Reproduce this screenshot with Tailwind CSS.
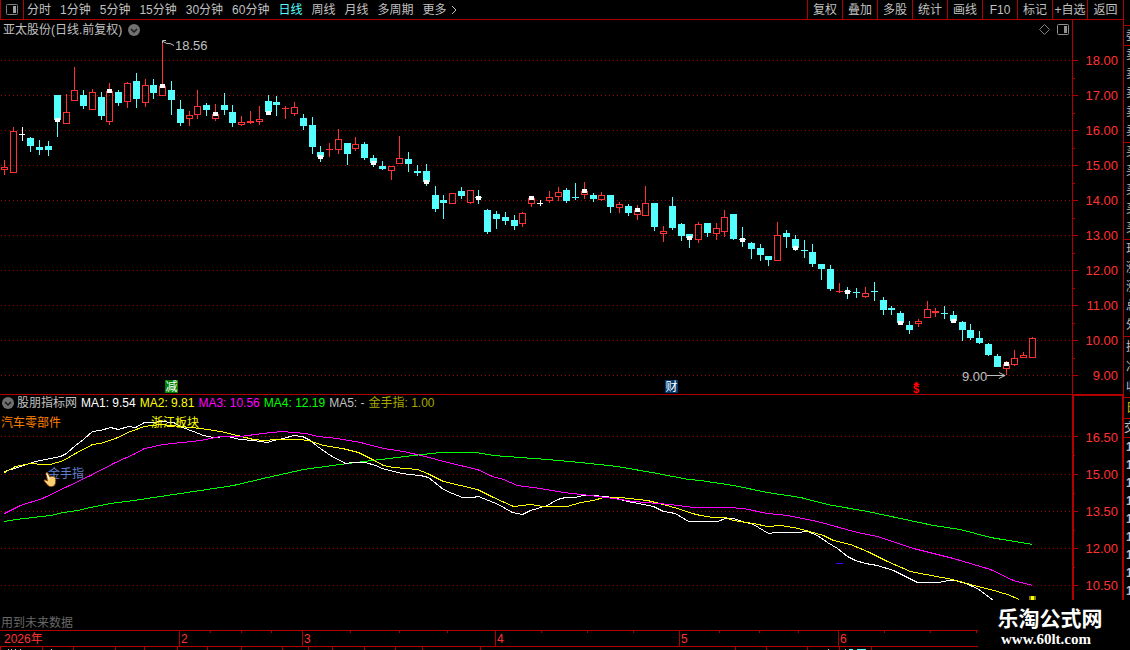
<!DOCTYPE html>
<html lang="zh-CN">
<head>
    <meta charset="UTF-8">
    <meta name="viewport" content="width=device-width, initial-scale=1.0">
    <title>亚太股份 日线</title>
    <script src="https://cdn.jsdelivr.net/npm/@tailwindcss/browser@4"></script>
</head>
<style>
    body { font-family: 'Liberation Sans', 'Noto Sans CJK SC', sans-serif; }
</style>
<body class="relative h-screen flex flex-col bg-black text-[#c0c0c0] text-xs leading-[14px] overflow-hidden">
    <div class="flex flex-1 min-h-0">
        <div class="flex-1 min-w-0 flex flex-col">
            <!-- Toolbar -->
            <nav class="h-5 shrink-0 flex justify-between border-b border-[#b00000] whitespace-nowrap">
                <div class="flex items-center gap-[3px]">
                    <button class="h-full w-6 flex items-center justify-center border-x border-[#b00000]" aria-label="侧栏">
                        <svg class="w-3 h-[11px]" viewBox="0 0 12 11"><rect x=".5" y=".5" width="11" height="10" rx="1" fill="none" stroke="#808080"/><rect x="7" y="2" width="3" height="7" fill="#a0a0a0"/></svg>
                    </button>
                    <div class="flex items-center gap-[9px]">
                        <button>分时</button>
                        <button>1分钟</button>
                        <button>5分钟</button>
                        <button>15分钟</button>
                        <button>30分钟</button>
                        <button>60分钟</button>
                        <button class="text-[#54ffff]">日线</button>
                        <button>周线</button>
                        <button>月线</button>
                        <button>多周期</button>
                        <button class="flex items-center gap-1">更多
                            <svg class="w-[6px] h-[10px]" viewBox="0 0 6 10" fill="none" stroke="#c0c0c0"><path d="M1 1l4 4-4 4"/></svg>
                        </button>
                    </div>
                </div>
                <div class="flex">
                    <button class="w-[35px] border-l border-[#b00000]">复权</button>
                    <button class="w-[35px] border-l border-[#b00000]">叠加</button>
                    <button class="w-[35px] border-l border-[#b00000]">多股</button>
                    <button class="w-[35px] border-l border-[#b00000]">统计</button>
                    <button class="w-[35px] border-l border-[#b00000]">画线</button>
                    <button class="w-[35px] border-l border-[#b00000]">F10</button>
                    <button class="w-[35px] border-l border-[#b00000]">标记</button>
                    <button class="w-[35px] border-l border-[#b00000]">+自选</button>
                    <button class="w-[36px] border-l border-[#b00000]">返回</button>
                </div>
            </nav>

            <!-- Daily candles -->
            <section class="flex-[375] min-h-0 flex">
                <div class="relative flex-1 min-w-0 border-b border-[#b00000]">
                    <svg id="candles" class="block w-full h-full" viewBox="0 20 1072 374" preserveAspectRatio="none"></svg>
                    <div class="absolute top-0 inset-x-0 h-[19px] pl-[3px] pr-[3px] flex items-center justify-between">
                        <div class="flex items-center gap-[6px]">
                            <h1>亚太股份(日线.前复权)</h1>
                            <button aria-label="展开"><svg class="w-3 h-3" viewBox="0 0 12 12"><circle cx="6" cy="6" r="6" fill="#707070"/><path d="M3 5l3 3 3-3" fill="none" stroke="#181818" stroke-width="1.5"/></svg></button>
                        </div>
                        <div class="flex items-center gap-[7px]">
                            <svg class="w-[11px] h-[11px]" viewBox="0 0 11 11"><path d="M5.500.5l5 5-5 5-5-5z" fill="none" stroke="#808080"/></svg>
                            <svg class="w-3 h-[11px]" viewBox="0 0 12 11"><rect x=".5" y=".5" width="11" height="10" rx="1" fill="none" stroke="#909090"/><rect x="7" y="2" width="3" height="7" fill="#909090"/></svg>
                        </div>
                    </div>
                </div>
                <div class="relative w-[51px] border-l border-[#b00000]">
                    <svg id="ticksTop" class="absolute left-0 top-0 w-[6px] h-full" viewBox="0 20 6 375" preserveAspectRatio="none"></svg>
                    <div class="pt-[23px] pr-[5px] text-right text-[13px] leading-[35px] text-[#ff3232]">
                        <div>18.00</div><div>17.00</div><div>16.00</div><div>15.00</div><div>14.00</div>
                        <div>13.00</div><div>12.00</div><div>11.00</div><div>10.00</div><div>9.00</div>
                    </div>
                </div>
            </section>

            <!-- Moving averages -->
            <section class="flex-[205] min-h-0 flex">
                <div class="relative flex-1 min-w-0">
                    <svg id="averages" class="block w-full h-full" viewBox="0 395 1072 205" preserveAspectRatio="none"></svg>
                    <div class="absolute top-0 left-0 h-4 pl-[2px] flex items-center gap-1 whitespace-nowrap">
                        <button class="flex items-center gap-[3px]">
                            <svg class="w-3 h-3" viewBox="0 0 12 12"><circle cx="6" cy="6" r="6" fill="#707070"/><path d="M3 5l3 3 3-3" fill="none" stroke="#181818" stroke-width="1.5"/></svg>
                            股朋指标网
                        </button>
                        <span class="text-white">MA1: 9.54</span>
                        <span class="text-[#ffff00]">MA2: 9.81</span>
                        <span class="text-[#ff00ff]">MA3: 10.56</span>
                        <span class="text-[#00ff00]">MA4: 12.19</span>
                        <span>MA5: -</span>
                        <span class="text-[#a8a800]">金手指: 1.00</span>
                    </div>
                </div>
                <div class="relative w-[51px] border-2 border-b-0 border-r border-[#b00000] -mt-px">
                    <svg id="ticksLow" class="absolute left-0 top-0 w-[5px] h-full" viewBox="0 396 5 204" preserveAspectRatio="none"></svg>
                    <div class="pt-[23px] pr-1 text-right text-[13px] leading-[37px] text-[#ff3232]">
                        <div>16.50</div><div>15.00</div><div>13.50</div><div>12.00</div><div>10.50</div>
                    </div>
                </div>
            </section>
        </div>

        <!-- Quote panel, cut by the window edge -->
        <aside class="w-[7px] shrink-0 border-l border-[#b00000] overflow-hidden whitespace-nowrap">
            <div class="h-[26px] border-b border-[#b00000]"></div>
            <div class="h-5 pl-[2px] leading-[20px] border-b border-[#b00000]">委比</div>
            <div class="h-[97px] pl-[2px] leading-[19px] border-b border-[#b00000]">
                <div>卖五</div><div>卖四</div><div>卖三</div><div>卖二</div><div>卖一</div>
            </div>
            <div class="h-[97px] pl-[2px] leading-[19px] border-b border-[#b00000]">
                <div>买一</div><div>买二</div><div>买三</div><div>买四</div><div>买五</div>
            </div>
            <div class="h-[97px] pl-[2px] leading-[19px] border-b border-[#b00000]">
                <div>现价</div><div>涨跌</div><div>涨幅</div><div>总量</div><div>外盘</div>
            </div>
            <div class="h-[61px] pl-[2px] leading-[20px] border-b border-[#b00000]">
                <div>换手</div><div>净资</div><div>收益</div>
            </div>
            <div class="h-[21px] pl-[2px] leading-[20px] text-[#c8c800] border-b border-[#b00000]">日</div>
            <div class="h-[19px] leading-[18px] border-b border-[#b00000]">交易</div>
            <div class="pl-[2px] leading-[18px] font-bold">
                <div>14</div><div>14</div><div>14</div><div>14</div><div>14</div><div>14</div><div>14</div><div>14</div><div>14</div>
            </div>
        </aside>
    </div>

    <!-- Status note and date axis -->
    <div class="h-[30px] shrink-0 flex items-end pl-px text-[#686868]">用到未来数据</div>
    <div class="relative h-[17px] shrink-0 grid grid-cols-[179fr_123fr_193fr_184fr_159fr_292fr] border-y border-[#b00000] text-[#ff3232] leading-[16px]">
        <div class="pl-[4px]">2026年</div>
        <div class="pl-px border-l border-[#b00000]">2</div>
        <div class="pl-px border-l border-[#b00000]">3</div>
        <div class="pl-px border-l border-[#b00000]">4</div>
        <div class="pl-px border-l border-[#b00000]">5</div>
        <div class="pl-px border-l border-[#b00000]">6</div>
        <svg id="ticksDate" class="absolute top-0 left-0 w-full h-[2px]" viewBox="0 0 1130 2" preserveAspectRatio="none"></svg>
    </div>
    <svg id="ticksNext" class="w-full h-[3px] shrink-0" viewBox="0 0 1130 3" preserveAspectRatio="none"></svg>

    <!-- Site mark -->
    <footer class="absolute right-0 bottom-0 w-[152px] h-[50px] pt-[7px] pr-[8px] bg-black text-white text-center font-bold">
        <div class="text-[21px] leading-[24px]">乐淘公式网</div>
        <a href="#" class="block pr-[8px] text-[15px] leading-[16px] font-['Liberation_Serif']">www.60lt.com</a>
    </footer>

    <script>
        // [kind, high, body top, body bottom, low, marker top]
        // r = rising, c = falling, w = unchanged
        const bars = [
            ['r',160,167,170,175], ['r',127,131,173,173], ['w',127,134,135,141], ['c',137,138,146,152], ['c',140,147,150,155],
            ['c',141,146,150,156], ['c',95,95,120,137,118], ['r',94,112,124,124], ['r',67,90,101,101], ['c',90,95,106,109],
            ['r',89,92,110,110], ['c',92,97,116,120], ['r',83,91,122,125,89], ['c',90,92,103,106], ['r',82,83,102,108],
            ['c',73,81,99,108], ['r',79,85,103,107], ['c',79,85,93,99], ['r',42,86,96,96,84], ['c',81,90,100,115],
            ['c',100,109,123,126], ['r',111,115,119,126], ['r',90,106,115,119], ['c',103,105,110,116], ['r',104,114,119,121,112],
            ['c',93,105,110,115], ['c',105,112,123,127], ['r',116,122,125,126], ['r',111,121,123,124], ['r',106,119,122,125],
            ['c',95,101,112,115,111], ['c',96,102,105,116], ['r',106,108,109,119], ['r',102,107,114,116], ['c',114,118,126,130],
            ['c',117,125,147,154], ['c',146,152,157,162,155], ['r',143,149,150,157], ['r',129,139,150,154], ['c',143,143,154,165],
            ['r',137,144,149,151], ['c',142,144,158,160], ['c',155,158,163,167,161], ['c',161,166,169,170], ['r',166,166,171,180],
            ['r',136,158,164,164], ['c',152,159,164,172], ['c',165,171,173,176], ['c',164,171,182,186,180], ['c',186,195,209,212],
            ['c',195,200,203,219], ['r',193,193,204,204], ['c',187,191,196,199], ['r',190,190,203,204], ['c',190,197,198,204,196],
            ['c',209,210,232,234], ['c',211,214,219,229], ['c',212,217,221,225], ['c',215,220,226,230], ['r',212,213,224,227],
            ['r',196,198,204,207,196], ['w',200,203,204,206], ['r',191,197,201,203], ['r',187,192,197,201], ['c',188,190,201,203],
            ['c',183,197,198,200], ['r',182,191,195,199,189], ['c',193,195,199,202], ['r',192,195,200,201], ['c',195,195,207,213],
            ['r',202,204,208,213], ['c',204,206,213,216], ['r',205,210,215,220,208], ['r',186,203,216,216], ['c',203,203,227,231],
            ['r',226,231,234,242], ['c',197,206,228,230], ['c',223,224,236,241], ['c',234,234,238,248,236], ['r',222,224,240,243],
            ['c',223,223,233,237], ['r',223,228,234,240], ['r',210,217,232,237], ['c',214,214,239,240], ['c',227,239,240,247,238],
            ['c',242,243,249,259], ['c',244,248,255,261], ['c',256,256,260,266], ['r',222,235,261,261], ['c',230,233,237,248],
            ['c',235,239,248,251,246], ['c',240,250,251,258], ['c',244,252,264,267], ['c',264,264,269,280], ['c',265,269,289,291],
            ['r',283,291,292,293], ['c',287,291,292,299,290], ['c',288,292,293,298], ['r',287,293,297,298], ['c',282,291,292,301],
            ['c',297,300,310,315], ['c',306,308,310,315], ['c',311,313,323,323,321], ['c',321,325,330,334], ['r',319,321,324,327],
            ['r',301,309,318,318], ['r',308,311,313,317], ['c',306,313,314,319], ['c',311,315,321,322,319], ['c',321,322,330,341],
            ['c',324,330,338,340], ['c',331,338,343,344], ['c',343,344,355,356], ['c',354,356,367,367], ['r',361,364,369,375,362],
            ['r',350,358,365,366], ['r',352,355,358,358], ['r',337,338,358,358]
        ];
        const colors = { r: '#ff3232', c: '#54ffff', w: '#ffffff' };
        const gridTop = [60, 95, 130, 165, 200, 235, 270, 305, 340, 375];
        const gridLow = [436, 474, 511, 548, 585];

        const box = (x, y, w, h, fill) => `<rect x="${x}" y="${y}" width="${w}" height="${h}" fill="${fill}" shape-rendering="crispEdges"/>`;
        const grid = rows => rows.map(y => `<path d="M1 ${y + 0.5}H1071" stroke="#a00000" stroke-dasharray="1 3" shape-rendering="crispEdges"/>`).join('');

        function drawBar(bar, i) {
            const [kind, high, top, bottom, low, marker] = bar;
            const x = Math.round(4 + i * 8.786);
            const color = colors[kind];
            let out = '';
            if (kind === 'r' && bottom - top > 2) {
                out += box(x, high, 1, top - high, color) + box(x, bottom, 1, low - bottom, color);
                out += `<rect x="${x - 2.5}" y="${top + 0.5}" width="6" height="${bottom - top - 1}" fill="none" stroke="${color}" shape-rendering="crispEdges"/>`;
            } else {
                out += box(x, high, 1, low - high, color);
                out += box(x - 3, top, kind === 'w' ? 6 : 7, bottom - top, color);
            }
            if (marker) out += box(x - 2, marker, 5, 4, '#ffffff');
            return out;
        }

        // Candle chart with its notes
        document.getElementById('candles').innerHTML = grid(gridTop) + bars.map(drawBar).join('') + `
            <path d="M162.500 43V40.500H166M163 41.500l4 2h3l4 2" fill="none" stroke="#c0c0c0"/>
            <text x="175" y="50" font-size="13" fill="#c0c0c0">18.56</text>
            <text x="962" y="381" font-size="13" fill="#c0c0c0">9.00</text>
            <path d="M987 375.500H1005M999 372.500l6 3-6 3" fill="none" stroke="#c0c0c0"/>
            <rect x="165" y="380" width="13" height="13" fill="#008000"/>
            <text x="165.500" y="391" font-size="12" fill="#ffffff">减</text>
            <rect x="665" y="380" width="13" height="13" fill="#003a70"/>
            <text x="665.500" y="391" font-size="12" fill="#ffffff">财</text>
            <path d="M913 385h7l-3.500-3.500z" fill="#ff0000"/>
            <text x="913" y="393" font-size="11" font-weight="bold" fill="#ff0000">$</text>`;

        // Moving average lines
        const lines = [
            ['#00ff00', '4,521 15,519 50,515 63,512 77,510 90,507 110,503 133,500 160,496 200,490 233,485 267,477 303,469 347,463 380,459 413,455 440,452 475,452 493,455 547,459 580,462 617,466 657,473 688,479 700,480 733,485 767,492 800,497 827,504 867,511 900,518 933,525 960,529 990,537 1032,544'],
            ['#ffffff', '4,471 20,466 35,461 50,458 60,456 66,453 75,445 83,439 92,431 100,430 110,427 118,429 128,426 135,427 144,422 153,422 160,421 173,422 182,427 193,431 203,435 213,437 227,436 240,439 253,440 267,442 273,440 283,438 293,435 302,436 310,440 317,446 330,455 345,463 353,462 365,462 375,465 382,468 397,472 408,474 420,475 428,477 443,489 452,493 462,497 472,497 478,496 483,498 498,504 512,512 522,514 530,510 547,505 557,499 565,497 575,497 582,495 593,495 613,497 627,501 638,503 653,506 663,511 675,513 688,521 717,521 725,518 733,518 742,521 753,524 768,533 775,532 797,532 807,531 817,535 827,542 837,548 847,556 855,560 865,563 877,565 893,570 907,577 917,582 938,582 948,580 955,580 965,583 977,588 993,600'],
            ['#ffff00', '4,472 15,466 30,463 43,464 50,464 63,460 75,453 92,444 100,443 115,438 130,431 144,426 160,424 180,426 200,428 220,431 237,435 253,439 263,440 277,439 298,439 308,440 323,445 342,448 358,452 372,459 383,465 393,467 417,469 427,473 443,481 460,485 477,489 493,497 513,506 530,504 543,506 567,506 580,502 593,500 603,497 620,497 647,500 663,504 677,508 692,513 700,515 713,517 725,517 733,520 753,523 767,526 780,525 798,528 823,535 833,540 850,544 867,551 887,561 910,571 920,573 947,578 960,581 973,585 990,589 1007,594 1019,599'],
            ['#ff00ff', '4,513 20,505 42,498 67,486 90,475 115,462 133,454 144,448 163,444 200,440 220,436 240,436 262,433 282,431 305,433 318,436 337,438 360,442 383,448 403,451 425,456 447,462 477,469 492,476 503,479 517,485 540,488 563,492 590,495 613,498 633,501 670,504 693,507 728,507 743,508 767,513 787,515 817,521 857,532 877,536 913,548 953,558 990,569 1013,580 1032,585']
        ];
        document.getElementById('averages').innerHTML = grid(gridLow)
            + lines.map(([color, points]) => `<polyline points="${points}" fill="none" stroke="${color}" transform="translate(.5 .5)" shape-rendering="crispEdges"/>`).join('')
            + box(836, 563, 7, 1, '#5000ff') + box(1029, 596, 7, 4, '#808000') + box(1031, 596, 3, 4, '#ffff00') + `
            <text x="1" y="427" font-size="12" fill="#ff8000">汽车零部件</text>
            <text x="151" y="427" font-size="12" fill="#ffff00">浙江板块</text>
            <text x="48" y="478" font-size="12" fill="#6080d0">金手指</text>
            <path d="M46 473c1-1 2 0 2.500 1l1.500 3c2-1.500 5-.5 5.500 1.500.5 3 0 5-1 7-2 1.500-5 1.500-6.500 0l-3-3.500c-1.500-1.500-1-2.500.5-2l2 1z" fill="#ffd070" stroke="#804010" stroke-width=".8"/>
            <path d="M46.500 473.500l3 6" stroke="#ffffff"/>`;

        // Axis ticks
        document.getElementById('ticksTop').innerHTML = gridTop.map(y => box(0, y, 5, 1, '#b00000') + (y < 370 ? box(0, y + 18, 2, 1, '#b00000') : '')).join('');
        document.getElementById('ticksLow').innerHTML = gridLow.map(y => box(0, y, 4, 1, '#b00000') + (y < 580 ? box(0, y + 19, 1, 1, '#b00000') : '')).join('');
        document.getElementById('ticksDate').innerHTML = [210, 241, 271, 350, 399, 447, 541, 587, 633, 719, 759, 798, 884, 930, 976].map(x => box(x, 0, 1, 2, '#b00000')).join('');
        document.getElementById('ticksNext').innerHTML = [0, 42, 73, 115, 144, 177, 207, 241, 282, 308, 332, 364, 395, 422, 480, 735, 766, 807, 839, 871].map(x => box(x, 0, 1, 3, '#b00000')).join('')
            + [8, 11, 15, 20, 51, 828, 845].map(x => box(x, 2, 1, 1, '#c0c0c0')).join('')
            + box(849, 2, 4, 1, '#54ffff') + box(857, 2, 9, 1, '#54ffff');
    </script>
</body>
</html>
